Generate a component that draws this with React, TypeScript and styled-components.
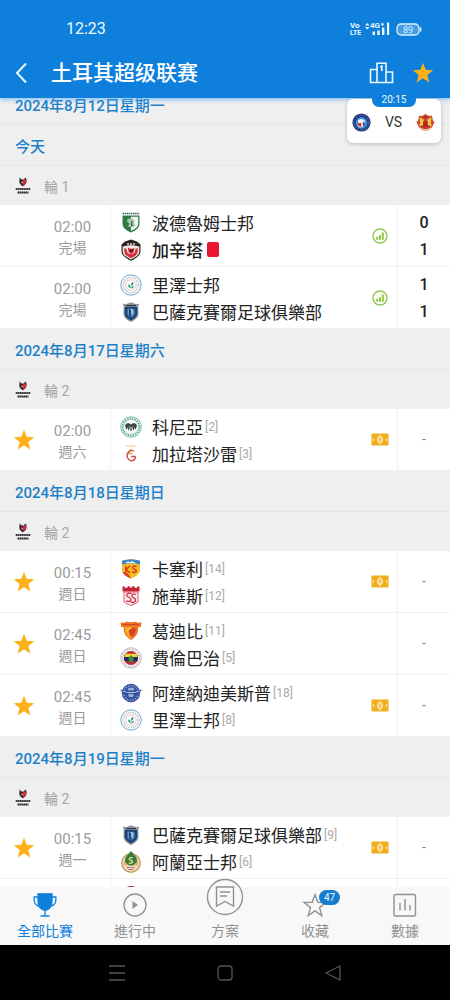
import React from "react";
import styled, { createGlobalStyle } from "styled-components";

const color = {
  brand: "#0f7fdc",
  date: "#1c80c9",
  surface: "#efefef",
  line: "#e6e6e6",
  rowLine: "#f1f1f1",
  text: "#222",
  muted: "#9b9b9b",
  star: "#fcb11b",
};

const GlobalStyle = createGlobalStyle`
  * { box-sizing: border-box; }
  body {
    margin: 0;
    background: #000;
    font-family: Roboto, "Noto Sans CJK TC", sans-serif;
    color: ${color.text};
  }
  button { border: 0; padding: 0; background: none; font: inherit; color: inherit; cursor: pointer; }
  a { color: inherit; text-decoration: none; }
  h1, h2, h3, p, ul { margin: 0; padding: 0; font-weight: inherit; list-style: none; }
  svg { display: block; flex: none; }
`;

const Shell = styled.div`
  display: flex;
  flex-direction: column;
  height: 100vh;
  background: ${color.surface};
`;

const TopBar = styled.header`
  position: relative;
  z-index: 2;
  height: 98px;
  flex: none;
  background: ${color.brand};
  color: #e9fbff;
  box-shadow: 0 1px 5px rgba(70, 160, 245, 0.75);
`;

const StatusBar = styled.div`
  display: flex;
  align-items: center;
  justify-content: space-between;
  height: 48px;
  padding: 10px 28px 0 66px;
  font-size: 16px;
  line-height: 20px;
`;

const StatusIcons = styled.div`
  display: flex;
  align-items: center;
  gap: 6px;
`;

const TitleBar = styled.div`
  display: flex;
  align-items: center;
  height: 50px;
  padding: 0 16px 0 14px;
`;

const Title = styled.h1`
  flex: 1;
  margin-left: 21px;
  font: 500 21px/32px Roboto, "Noto Sans CJK SC", sans-serif;
  color: #fff;
`;

const TitleActions = styled.div`
  display: flex;
  align-items: center;
  gap: 18px;
`;

const LiveCard = styled.a`
  position: absolute;
  top: 99px;
  right: 9px;
  display: flex;
  align-items: center;
  justify-content: space-between;
  width: 94px;
  height: 44px;
  padding: 2px 6px 0 5px;
  border-radius: 6px;
  background: #fff;
  box-shadow: 0 1px 4px rgba(0, 0, 0, 0.22);
  color: #333;
  font-size: 14px;
`;

const LiveTime = styled.span`
  position: absolute;
  top: -7px;
  left: 25px;
  width: 44px;
  border-radius: 0 0 7px 7px;
  background: ${color.brand};
  color: #e9fbff;
  font-size: 10px;
  line-height: 15px;
  text-align: center;
`;

const Fixtures = styled.main`
  flex: 1;
  min-height: 0;
  overflow-y: auto;
  scrollbar-width: none;
`;

const FixtureList = styled.div`
  margin-top: -14px;
`;

const DateHeading = styled.h2`
  height: 41px;
  padding-left: 15px;
  border-bottom: 1px solid ${color.line};
  color: ${color.date};
  font-size: 15px;
  font-weight: 500;
  line-height: 44px;
`;

const RoundHeading = styled.h3`
  display: flex;
  align-items: center;
  gap: 13px;
  height: 39px;
  padding-left: 15px;
  color: #a6a6a6;
  font-size: 14px;
`;

const MatchRow = styled.li`
  display: flex;
  height: 62px;
  background: #fff;
  border-bottom: 1px solid ${color.rowLine};
`;

const StarCell = styled.div`
  display: flex;
  align-items: center;
  justify-content: center;
  width: 48px;
`;

const Kickoff = styled.div`
  width: 63px;
  padding-top: 12px;
  padding-right: 14px;
  padding-left: 1px;
  border-right: 1px solid ${color.rowLine};
  color: ${color.muted};
  font-size: 14px;
  line-height: 21px;
  text-align: center;
`;

const Clock = styled.time`
  display: block;
  font-size: 15px;
`;

const Teams = styled.div`
  flex: 1;
  min-width: 0;
  padding: 4px 0 0 9px;
`;

const TeamLine = styled.p<{ $strong?: boolean }>`
  display: flex;
  align-items: center;
  height: 27px;
  font-size: 17px;
  font-weight: ${(p) => (p.$strong ? 500 : 400)};
  white-space: nowrap;
`;

const TeamName = styled.span`
  margin-left: 10px;
`;

const Rank = styled.span`
  margin-left: 2px;
  color: #a9a9a9;
  font-size: 12px;
`;

const RedCard = styled.span`
  width: 12px;
  height: 15px;
  margin-left: 4px;
  border-radius: 2px;
  background: #e5162d;
`;

const MarkCell = styled.div`
  display: flex;
  align-items: center;
  justify-content: center;
  width: 36px;
  border-right: 1px solid ${color.rowLine};
`;

const Scores = styled.div`
  display: flex;
  flex-direction: column;
  justify-content: center;
  width: 52px;
  font-size: 16px;
  font-weight: 500;
  line-height: 27px;
  text-align: center;
`;

const NoScore = styled.span`
  color: #888;
  font-size: 14px;
  font-weight: 400;
`;

const TabBar = styled.nav`
  position: relative;
  z-index: 1;
  display: flex;
  flex: none;
  height: 58px;
  background: #f8f8f8;
`;

const Tab = styled.a<{ $active?: boolean }>`
  display: flex;
  flex: 1;
  flex-direction: column;
  align-items: center;
  justify-content: flex-end;
  gap: 2px;
  padding-bottom: 4px;
  color: ${(p) => (p.$active ? color.brand : "#919191")};
  font-size: 14px;
  line-height: 20px;
`;

const TabIcon = styled.span`
  position: relative;
  display: flex;
  align-items: center;
  justify-content: center;
  height: 28px;
`;

const RaisedIcon = styled.span`
  display: flex;
  margin-bottom: 3px;
  border-radius: 50%;
  background: #f8f8f8;
`;

const Badge = styled.span`
  position: absolute;
  top: -1px;
  left: 17px;
  width: 21px;
  border-radius: 8px;
  background: #167ccd;
  color: #e9fbff;
  font-size: 10px;
  line-height: 15px;
  text-align: center;
`;

const SystemBar = styled.div`
  display: flex;
  flex: none;
  align-items: center;
  justify-content: center;
  gap: 90px;
  height: 55px;
  background: #000;
`;

const Star = ({ size }: { size: number }) => (
  <svg width={size} height={size} viewBox="0 0 22 22" aria-hidden="true">
    <path d="M11 .8l2.700 6.900 7.500.5-5.800 4.800 1.900 7.400L11 16.300l-6.300 4.100 1.900-7.400L.8 8.200l7.500-.5z" fill={color.star} />
  </svg>
);

const crestArt: Record<string, React.ReactNode> = {
  bodrum: (
    <>
      <path d="M2.500 1.500h17" stroke="#32684a" strokeWidth="1.500" strokeDasharray="1.500 .6" />
      <path d="M2.500 3.500h17v8c0 4.500-4 7-8.500 9-4.500-2-8.500-4.500-8.500-9z" fill="#2e7a45" />
      <path d="M11 4.700h7.200v6.800c0 3.500-3.200 5.800-7.200 7.500z" fill="#f2f6f1" />
      <path d="M7 7.500l4-1.500 3.500 2-.5 3 1.500 2.500-3.500 2-4-1 1.500-3-2-1.500z" fill="#a9cbb0" />
      <path d="M11 8.500l2 1.500-1 2 1.500 1.500-2.500 1z" fill="#2e7a45" />
    </>
  ),
  gaziantep: (
    <>
      <path d="M1.500 5.500L5 2.500 11 .6l6 1.900 3.500 3v7c0 4-5 7.300-9.500 9.200-4.500-1.900-9.500-5.200-9.500-9.200z" fill="#2b2322" />
      <path d="M2.700 7.800c5-2 11.600-2 16.600 0v4.700c0 3.500-4.300 6.200-8.300 7.900-4-1.700-8.300-4.400-8.300-7.900z" fill="#f6e4e3" />
      <path d="M4.300 9v3.800c0 2.500 3 4.700 6.700 6.300 3.700-1.600 6.700-3.800 6.700-6.300V9l-2.500 1c.5 3-1.200 5-4.200 5s-4.700-2-4.200-5z" fill="#d4303b" />
      <path d="M8 8.500l3 1.500 3.500-1-1 4.500-2.500 1.200-2.500-1.700z" fill="#c8202c" />
      <path d="M10 10.500l3 .3-1 2-2-.3z" fill="#2b2322" />
      <path d="M7 5h8" stroke="#d9d2cf" strokeWidth="1.500" strokeDasharray="2 1" />
    </>
  ),
  rize: (
    <>
      <circle cx="11" cy="11" r="10.200" fill="#fbfdfd" stroke="#6fa6cb" strokeWidth="1" />
      <circle cx="11" cy="11" r="7.600" fill="none" stroke="#bdbfc6" strokeWidth="1.700" strokeDasharray="1.200 1" />
      <circle cx="11" cy="11" r="5.300" fill="#fff" stroke="#dba3ab" strokeWidth=".6" />
      <path d="M10.800 14.500c-2.500-1-3-2.800-2.500-4 1.500.3 2.500 1.300 2.500 4zm.4-2.500c-.8-2 .3-3.600 2-4 .8 1.600 0 3.300-2 4z" fill="#2d9e5f" />
      <path d="M11 14.500c2-.3 3-1.200 3-2.500-1.600 0-2.800.8-3 2.500z" fill="#3b86c0" />
    </>
  ),
  basaksehir: (
    <>
      <path d="M2.800 2.500l3 .8L11 1.300l5.200 2 3-.8-1 3.500.3 6.500c0 4-3.500 6.500-7.500 8.500-4-2-7.500-4.500-7.500-8.500L3.800 6z" fill="#8d9399" />
      <path d="M4.700 6h12.600v6.500c0 3-2.800 5.200-6.300 7-3.500-1.800-6.300-4-6.300-7z" fill="#1c4677" />
      <path d="M7.500 8l1.500-.8v7l2.500 3-4-3.200zM11 7.500l3.500 1v5l-2.500 2.700-1-2z" fill="#6297c8" />
      <path d="M10.300 8.500l2 .5-.5 4" stroke="#dfeaf4" strokeWidth=".9" fill="none" />
      <path d="M6 4.600h10" stroke="#2c3c4e" strokeWidth="1.300" />
    </>
  ),
  konya: (
    <>
      <circle cx="11" cy="11" r="10.300" fill="#e4f2ec" stroke="#7cc0aa" strokeWidth="1" />
      <circle cx="11" cy="11" r="8.300" fill="none" stroke="#58a58c" strokeWidth="1.700" strokeDasharray="1.400 1.100" />
      <circle cx="11" cy="11" r="6.500" fill="#fbfdfc" />
      <path d="M5 9.500c1.500-3 4.500-2.500 6-.8 1.500-1.700 4.500-2.200 6 .8l-1.400 4.300-1.300-2.300-.5 3.500-1.300-3L11 15.500 9.500 12l-1.300 3-.5-3.500-1.300 2.300z" fill="#3b4a49" />
      <path d="M9 10.500l2 2 2-2" stroke="#fff" strokeWidth=".8" fill="none" />
    </>
  ),
  galatasaray: (
    <>
      <path d="M6 4l1.500-1.500 1 1.300 2-1.800 1.500 1.800 2-1.300L15.500 4" stroke="#e9b779" strokeWidth=".9" fill="none" />
      <path d="M14.500 8.500c-2.500-2-6-.5-6 2h4" stroke="#dda04f" strokeWidth="1.300" fill="none" />
      <path d="M12.500 7c-3.500 0-5.500 3-5.300 6 .2 3.500 2.600 5 4.800 4.700 2.500-.3 3.500-2.200 3.200-4.200H11" stroke="#c65a42" strokeWidth="1.500" fill="none" />
    </>
  ),
  kayseri: (
    <>
      <path d="M2 2.800L5 2l6-.8 6 .8 3 .8v8.700c0 4.500-4.500 7-9 9-4.500-2-9-4.500-9-9z" fill="#f3bd21" />
      <path d="M2 2.800L5 2l6-.8 6 .8 3 .8v4c-3-1.800-15-1.800-18 0z" fill="#3987c7" />
      <path d="M5 5l3-1.500 2 .8L12 3l4.500 2.500z" fill="#f4f8fa" />
      <path d="M2.500 14c4.500 0 6.500 2 8.500 6.500-4-1.600-7.500-3.500-8.500-6.500z" fill="#e23b26" />
      <path d="M5.800 8v6.500M10 8l-4 3.500 4 3.500M16.500 8.700c-2-1.400-4.200-.4-3.800 1.200.5 1.600 3.500 1 3.700 2.800.1 1.800-2.600 2.300-4.200 1" stroke="#df3624" strokeWidth="1.500" fill="none" />
    </>
  ),
  sivas: (
    <>
      <path d="M2.500 1.500h2.300v1.300h2.700V1.200h2.300v1.300h2.400V1.200h2.300v1.600h2.700V1.500h2.300v5h-17z" fill="#c62035" />
      <path d="M4 7h14v10l-2.500 1.500-4.500 2-4.500-2L4 17z" fill="#faeced" stroke="#d34c5b" strokeWidth=".9" />
      <path d="M11.500 8.500c-3-1-5.500.5-4.800 2.300.8 1.800 4.300 1.200 4.400 3.700.1 2.100-3 2.500-5 1.200M16 9.500c-2-1-4.500-.2-4.200 1.500.3 1.700 3.700 1.700 3.700 4 0 2.500-3 3-4.800 2" stroke="#cf2b40" strokeWidth="1.300" fill="none" />
    </>
  ),
  goztepe: (
    <>
      <path d="M.5 2.300c3 1 5 0 6.500-.5 2 .5 6 .5 8 0 1.500.5 3.500 1.500 6.500.5l-.7 4.700h-2.600c.3 5-.9 9-7.200 13-6.300-4-7.500-8-7.200-13H1.200z" fill="#ee7422" />
      <path d="M5 7h6v11.500c-4.500-2.500-6.200-5.500-6-11.500z" fill="#f7a820" />
      <path d="M8.500 10l4-2.500 3.500 1.500-1.500 5-3.500 3-1.500-3.500z" fill="#d83c26" />
      <path d="M6 11l6-3.500" stroke="#fbd14c" strokeWidth="1.300" />
      <path d="M3 4.500h16" stroke="#cf4627" strokeWidth="1.200" />
    </>
  ),
  fenerbahce: (
    <>
      <circle cx="11" cy="11" r="10.300" fill="#f1eff0" stroke="#b9aeb4" strokeWidth=".8" />
      <circle cx="11" cy="11" r="8.700" fill="none" stroke="#bdb4ba" strokeWidth="1.100" strokeDasharray="1.500 1.500" />
      <circle cx="11" cy="11" r="7" fill="#c3253a" />
      <path d="M4.600 8h12.800c.9 2 .9 4 0 6H4.600c-.9-2-.9-4 0-6z" fill="#212c57" />
      <path d="M5.500 6.800h11l1.300 3.200H4.200z" fill="#f3da31" />
      <path d="M11 8l2.800 3-1 3.500-1.800 1.500-1.800-1.500-1-3.500z" fill="#3a8b3c" />
    </>
  ),
  demirspor: (
    <>
      <circle cx="11" cy="11" r="9.200" fill="#35539f" />
      <circle cx="11" cy="11" r="7.300" fill="none" stroke="#a9b8dd" strokeWidth="1.100" strokeDasharray="1.500 1.300" />
      <path d="M0 7.500l7 1.300h8l7-1.300-3.500 4.300-4.500.7H8l-4.500-.7z" fill="#2b4893" />
      <path d="M2.500 9l5 1.500h7L19.500 9" stroke="#c4cfea" strokeWidth="1" fill="none" />
      <path d="M8 6.500c1.500-1.500 4.500-1.500 6 0v2H8zM8 12h6l-1 3H9z" fill="#9aacdb" />
    </>
  ),
  alanya: (
    <>
      <circle cx="11" cy="12" r="9.200" fill="#f2e6cf" stroke="#c99d57" strokeWidth="1.500" />
      <circle cx="11" cy="12" r="7.300" fill="#e7b173" />
      <path d="M11 0l2.500 3 3 3.500L17 11l-6 5-6-5 .5-4.500L8.500 3z" fill="#397d3d" />
      <path d="M12.800 7c-2-1-3.800 0-3.500 1.300.3 1.300 3.300.8 3.300 2.500 0 1.600-2.200 1.900-3.700.9" stroke="#f0e9a0" strokeWidth="1.200" fill="none" />
      <path d="M4.500 14.500h13l-1.500 4-5 2-5-2z" fill="#e7dac9" />
      <path d="M7 16.500h8M8.500 18.500h5" stroke="#a0614a" strokeWidth="1.200" strokeDasharray="2 .7" />
    </>
  ),
  hatay: <circle cx="11" cy="10.500" r="10.500" fill="#a6263a" />,
  johor: (
    <>
      <circle cx="11" cy="11" r="10.500" fill="#20377c" />
      <circle cx="11" cy="11" r="8.500" fill="none" stroke="#5f7fc0" strokeWidth="1" strokeDasharray="2 1.200" />
      <circle cx="11" cy="11.500" r="6.800" fill="#3e92d3" />
      <path d="M7 8.500c3-2.500 5-2 7.500 0l.5 3-2.500 1v4H7.500z" fill="#eff5fa" />
      <path d="M6.500 11.500h4.300v4.800L7.500 15z" fill="#dc3040" />
      <path d="M12 10l3 1.500-1 3.500z" fill="#20377c" />
    </>
  ),
  selangor: (
    <>
      <circle cx="11" cy="11.500" r="9" fill="#c9352e" />
      <path d="M.5 10l2-1 1-6 4 .8L11 .8l3.500 3 4-.8 1 6 2 1-1.500 3.500H2z" fill="#cf4a30" />
      <path d="M4 5l7 4 7-4-1 6.500 1.500 4-5-1.500h-5l-5 1.500 1.500-4z" fill="#f5ca46" />
      <circle cx="11" cy="11" r="3" fill="#bd2b2b" />
      <path d="M8.500 3.500h5L11 7zM8 13.500l3-2 3 2-1 2.500H9z" fill="#9c2b26" />
      <path d="M4.500 17c4 3.300 9 3.300 13 0" stroke="#edd0a0" strokeWidth="1.500" fill="none" />
    </>
  ),
};

const Crest = ({ id, size = 22 }: { id: string; size?: number }) => (
  <svg width={size} height={size} viewBox="0 0 22 22" aria-hidden="true">
    {crestArt[id]}
  </svg>
);

const LeagueMark = () => (
  <svg width="16" height="18" viewBox="0 0 16 18" aria-hidden="true">
    <path d="M4.200.8c1.200.2 2 .9 2.500 2l2-.3c.8-1.200 1.700-1.700 2.600-1.700-.3.700-.3 1.300 0 2 .8 2.500-.7 5.200-3.500 6.400-2.600-1.200-4.200-3.700-3.200-6.200.2-.8.100-1.500-.4-2.200z" fill="#252326" />
    <path d="M8 3l3.300-.9c.8 2.600-.4 5.300-3.500 7z" fill="#d8293f" />
    <path d="M6 4.500l2 .5-1 1.800z" fill="#eee" />
    <path d="M.7 12h14.600" stroke="#3a383a" strokeWidth="1.900" strokeDasharray="1.600 .3" />
    <path d="M2.500 15.500h11" stroke="#2d2b2d" strokeWidth="2.200" strokeDasharray="2 .3 1.300 .3" />
  </svg>
);

const StatsMark = () => (
  <svg width="16" height="16" viewBox="0 0 16 16" aria-label="統計">
    <circle cx="8" cy="8" r="7" fill="#fbfff4" stroke="#8fc454" strokeWidth="1.300" />
    <path d="M5.200 8.800v3M8 7.200v4.600M10.800 4.600v7.200" stroke="#8dcc40" strokeWidth="2" />
  </svg>
);

const FieldMark = () => (
  <svg width="18" height="13" viewBox="0 0 18 13" aria-label="陣容">
    <rect x="0.500" y="0.500" width="17" height="12" rx="1" fill="#f2ad1c" />
    <ellipse cx="9" cy="6.500" rx="2.300" ry="3" fill="#f7c65a" stroke="#fff0c4" strokeWidth="1.200" />
    <path d="M9 1.500v2M9 9.500v2M2.500 5v3M15.500 5v3" stroke="#fde4a4" strokeWidth="1.200" />
  </svg>
);

type Team = { crest: string; name: string; rank?: number; score?: number; red?: boolean };
type Match = { time: string; note: string; starred?: boolean; mark?: "stats" | "field"; teams: [Team, Team] };
type Day = { date: string; round: string; matches: Match[] };

const days: Day[] = [
  {
    date: "今天",
    round: "輪 1",
    matches: [
      {
        time: "02:00", note: "完場", mark: "stats",
        teams: [
          { crest: "bodrum", name: "波德魯姆士邦", score: 0 },
          { crest: "gaziantep", name: "加辛塔", score: 1, red: true },
        ],
      },
      {
        time: "02:00", note: "完場", mark: "stats",
        teams: [
          { crest: "rize", name: "里澤士邦", score: 1 },
          { crest: "basaksehir", name: "巴薩克賽爾足球俱樂部", score: 1 },
        ],
      },
    ],
  },
  {
    date: "2024年8月17日星期六",
    round: "輪 2",
    matches: [
      {
        time: "02:00", note: "週六", starred: true, mark: "field",
        teams: [
          { crest: "konya", name: "科尼亞", rank: 2 },
          { crest: "galatasaray", name: "加拉塔沙雷", rank: 3 },
        ],
      },
    ],
  },
  {
    date: "2024年8月18日星期日",
    round: "輪 2",
    matches: [
      {
        time: "00:15", note: "週日", starred: true, mark: "field",
        teams: [
          { crest: "kayseri", name: "卡塞利", rank: 14 },
          { crest: "sivas", name: "施華斯", rank: 12 },
        ],
      },
      {
        time: "02:45", note: "週日", starred: true,
        teams: [
          { crest: "goztepe", name: "葛迪比", rank: 11 },
          { crest: "fenerbahce", name: "費倫巴治", rank: 5 },
        ],
      },
      {
        time: "02:45", note: "週日", starred: true, mark: "field",
        teams: [
          { crest: "demirspor", name: "阿達納迪美斯普", rank: 18 },
          { crest: "rize", name: "里澤士邦", rank: 8 },
        ],
      },
    ],
  },
  {
    date: "2024年8月19日星期一",
    round: "輪 2",
    matches: [
      {
        time: "00:15", note: "週一", starred: true, mark: "field",
        teams: [
          { crest: "basaksehir", name: "巴薩克賽爾足球俱樂部", rank: 9 },
          { crest: "alanya", name: "阿蘭亞士邦", rank: 6 },
        ],
      },
    ],
  },
];

const MatchItem = ({ match }: { match: Match }) => (
  <MatchRow>
    <StarCell>
      {match.starred && (
        <button aria-label="取消收藏" aria-pressed="true"><Star size={22} /></button>
      )}
    </StarCell>
    <Kickoff>
      <Clock>{match.time}</Clock>
      {match.note}
    </Kickoff>
    <Teams>
      {match.teams.map((team) => (
        <TeamLine key={team.name} $strong={team.red}>
          <Crest id={team.crest} />
          <TeamName>{team.name}</TeamName>
          {team.rank && <Rank>[{team.rank}]</Rank>}
          {team.red && <RedCard role="img" aria-label="紅牌" />}
        </TeamLine>
      ))}
    </Teams>
    <MarkCell>
      {match.mark === "stats" && <StatsMark />}
      {match.mark === "field" && <FieldMark />}
    </MarkCell>
    <Scores>
      {match.teams[0].score === undefined ? (
        <NoScore>-</NoScore>
      ) : (
        match.teams.map((team) => <span key={team.name}>{team.score}</span>)
      )}
    </Scores>
  </MatchRow>
);

export default function App() {
  return (
    <Shell>
      <GlobalStyle />
      <TopBar>
        <StatusBar>
          <time>12:23</time>
          <StatusIcons>
            <svg width="40" height="16" viewBox="0 0 40 16" fill="#e9fbff" fontFamily="Roboto, sans-serif" fontWeight="700" aria-label="4G+">
              <text x="0" y="7" fontSize="8">Vo</text>
              <text x="0" y="14" fontSize="7">LTE</text>
              <path d="M15 4.500l2.300-2.500 2.200 2.500zM15 6l2.300 2.500L19.500 6z" />
              <text x="20" y="7" fontSize="8">4G</text>
              <path d="M31 2.700h3v1h-3zM32 1.700h1v3h-1zM22.500 10.500H25v3.500h-2.500zM27.300 9.500h2.400V14h-2.400zM32 6.500h2.400V14H32zM37 1.500h2.200V14H37z" />
            </svg>
            <svg width="26" height="13" viewBox="0 0 26 13" aria-label="89%">
              <rect x="1" y="1" width="22" height="11" rx="4" fill="#4a9de4" stroke="#d7f2ff" strokeWidth="1.300" />
              <path d="M24.700 4.500v4" stroke="#d7f2ff" strokeWidth="1.500" />
              <text x="12" y="10" fontSize="9" fill="#d7f2ff" textAnchor="middle" fontFamily="Roboto, sans-serif">89</text>
            </svg>
          </StatusIcons>
        </StatusBar>
        <TitleBar>
          <button aria-label="返回">
            <svg width="16" height="22" viewBox="0 0 16 22" fill="none" stroke="#e9fbff" strokeWidth="2">
              <path d="M12 1.500L3 11l9 9.500" />
            </svg>
          </button>
          <Title lang="zh-Hans">土耳其超级联赛</Title>
          <TitleActions>
            <button aria-label="積分榜">
              <svg width="25" height="22" viewBox="0 0 25 22" fill="none" stroke="#e9fbff" strokeWidth="1.600">
                <path d="M8 20.500V1.200h9v19.300M8 7.500H1.500v13h22V10H17M11.300 5l1.500-.8V9" />
              </svg>
            </button>
            <button aria-label="收藏聯賽"><Star size={22} /></button>
          </TitleActions>
        </TitleBar>
        <LiveCard href="#live">
          <LiveTime>20:15</LiveTime>
          <Crest id="johor" size={19} />
          VS
          <Crest id="selangor" size={19} />
        </LiveCard>
      </TopBar>

      <Fixtures>
        <FixtureList>
          <DateHeading>2024年8月12日星期一</DateHeading>
          {days.map((day) => (
            <section key={day.date}>
              <DateHeading>{day.date}</DateHeading>
              <RoundHeading><LeagueMark />{day.round}</RoundHeading>
              <ul>
                {day.matches.map((match, i) => <MatchItem key={i} match={match} />)}
              </ul>
            </section>
          ))}
          <MatchRow as="div">
            <StarCell />
            <Kickoff />
            <Teams><TeamLine><Crest id="hatay" /></TeamLine></Teams>
            <MarkCell />
            <Scores />
          </MatchRow>
        </FixtureList>
      </Fixtures>

      <TabBar>
        <Tab href="#all" $active aria-current="page">
          <TabIcon>
            <svg width="24" height="24" viewBox="0 0 24 24" fill="none" stroke="currentColor" strokeWidth="1.300">
              <path d="M5 .8h14v7.500c0 5-3 9-7 9s-7-4-7-9z" fill="currentColor" />
              <path d="M5 4H1.200c-.5 5 .8 8.500 5 9M19 4h3.800c.5 5-.8 8.500-5 9M12 17v6M7.500 23h9" />
            </svg>
          </TabIcon>
          全部比賽
        </Tab>
        <Tab href="#live-now">
          <TabIcon>
            <svg width="24" height="24" viewBox="0 0 24 24" fill="none" stroke="currentColor" strokeWidth="1.300">
              <circle cx="12" cy="12" r="11" />
              <path d="M9.500 8l5.500 4-5.500 4z" fill="currentColor" stroke="none" />
            </svg>
          </TabIcon>
          進行中
        </Tab>
        <Tab href="#plans">
          <RaisedIcon>
            <svg width="38" height="38" viewBox="0 0 38 38" fill="none" stroke="currentColor" strokeWidth="1.400">
              <circle cx="19" cy="19" r="17.500" />
              <path d="M10.500 9h17v19L19 23.500 10.500 28zM14 14h10M14 18h7" />
            </svg>
          </RaisedIcon>
          方案
        </Tab>
        <Tab href="#favourites">
          <TabIcon>
            <svg width="26" height="26" viewBox="0 0 26 26" fill="none" stroke="currentColor" strokeWidth="1.400">
              <path d="M13 2.500l2.800 7.700 8.200.3-6.500 5.100 2.300 7.900-6.800-4.600-6.800 4.600 2.300-7.900L2 10.500l8.200-.3z" />
            </svg>
            <Badge>47</Badge>
          </TabIcon>
          收藏
        </Tab>
        <Tab href="#data">
          <TabIcon>
            <svg width="24" height="24" viewBox="0 0 24 24" fill="none" stroke="currentColor" strokeWidth="1.400">
              <rect x="1" y="1.500" width="21.500" height="21.500" rx="1.500" />
              <path d="M7 10v7.500M12 6v11.500M17 12v5.500" />
            </svg>
          </TabIcon>
          數據
        </Tab>
      </TabBar>

      <SystemBar>
        <button aria-label="最近">
          <svg width="18" height="18" viewBox="0 0 18 18" stroke="#555" strokeWidth="1.300">
            <path d="M1 2h16M1 9h16M1 16h16" />
          </svg>
        </button>
        <button aria-label="主頁">
          <svg width="18" height="18" viewBox="0 0 18 18" fill="none" stroke="#555" strokeWidth="1.300">
            <rect x="2" y="2" width="14" height="14" rx="3" />
          </svg>
        </button>
        <button aria-label="返回上一頁">
          <svg width="18" height="18" viewBox="0 0 18 18" fill="none" stroke="#555" strokeWidth="1.300" strokeLinejoin="round">
            <path d="M16 2v14L2 9z" />
          </svg>
        </button>
      </SystemBar>
    </Shell>
  );
}
